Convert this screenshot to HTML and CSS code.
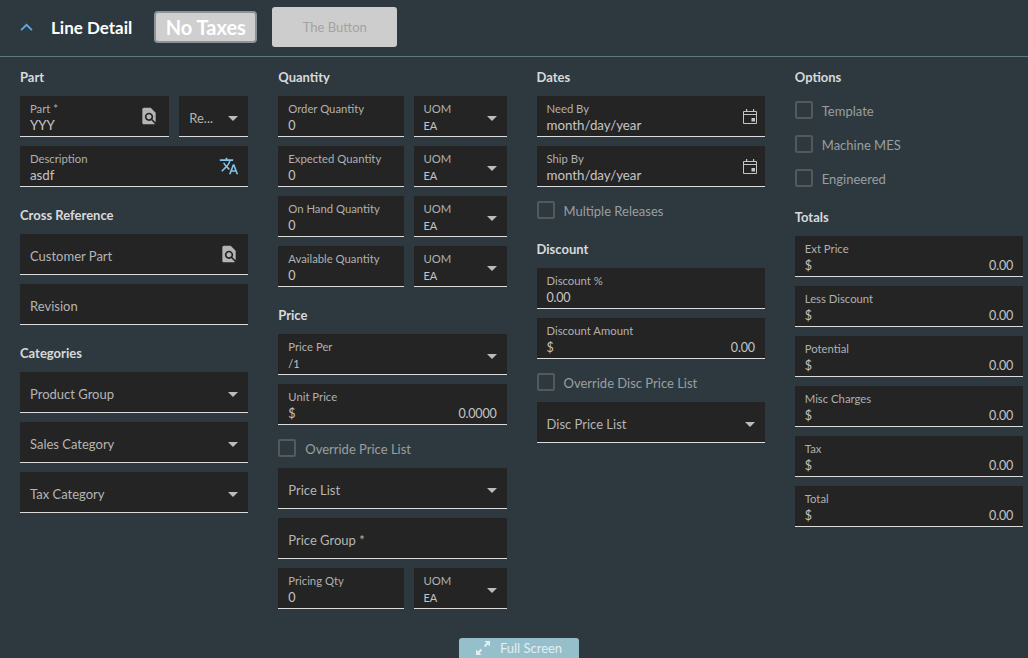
FILE: index.html
```html
<!DOCTYPE html>
<html lang="en">
<head>
    <meta charset="UTF-8">
    <title>Line Detail</title>
    <link rel="stylesheet" href="styles.css">
</head>
<body>
    <header class="top-bar">
        <svg class="chevron" viewBox="0 0 14 10"><path d="M1 8l6-6 6 6" /></svg>
        <span class="top-title">Line Detail</span>
        <button class="tag-button">No Taxes</button>
        <button class="plain-button">The Button</button>
    </header>

    <main class="columns">
        <section>
            <h2>Part</h2>
            <div class="split split-part">
                <div class="field"><label>Part *</label><div class="value">YYY</div>
                    <svg class="icon" viewBox="0 0 24 24"><path d="M20 19.59V8l-6-6H6c-1.1 0-1.99.9-1.99 2L4 20c0 1.1.89 2 1.99 2H18c.45 0 .85-.15 1.19-.4l-4.43-4.43c-.8.52-1.74.83-2.76.83-2.76 0-5-2.24-5-5s2.24-5 5-5 5 2.24 5 5c0 1.02-.31 1.96-.83 2.75L20 19.59zM9 13c0 1.66 1.34 3 3 3s3-1.34 3-3-1.34-3-3-3-3 1.34-3 3z"/></svg>
                </div>
                <div class="field single"><span class="hint">Re...</span><i class="caret"></i></div>
            </div>
            <div class="field"><label>Description</label><div class="value">asdf</div>
                <svg class="icon icon-blue" viewBox="0 0 24 24"><path d="M12.87 15.07l-2.54-2.51.03-.03c1.74-1.94 2.98-4.17 3.71-6.53H17V4h-7V2H8v2H1v1.99h11.17C11.5 7.92 10.43 9.75 9 11.35 8.07 10.32 7.3 9.19 6.69 8h-2c.73 1.63 1.73 3.17 2.98 4.56l-5.09 5.02L4 19l5-5 3.11 3.11.76-2.04zM18.5 10h-2L12 22h2l1.12-3h4.75L21 22h2l-4.5-12zm-2.62 7l1.62-4.33L19.12 17h-3.24z"/></svg>
            </div>

            <h2>Cross Reference</h2>
            <div class="field single"><span class="hint">Customer Part</span>
                <svg class="icon" viewBox="0 0 24 24"><path d="M20 19.59V8l-6-6H6c-1.1 0-1.99.9-1.99 2L4 20c0 1.1.89 2 1.99 2H18c.45 0 .85-.15 1.19-.4l-4.43-4.43c-.8.52-1.74.83-2.76.83-2.76 0-5-2.24-5-5s2.24-5 5-5 5 2.24 5 5c0 1.02-.31 1.96-.83 2.75L20 19.59zM9 13c0 1.66 1.34 3 3 3s3-1.34 3-3-1.34-3-3-3-3 1.34-3 3z"/></svg>
            </div>
            <div class="field single"><span class="hint">Revision</span></div>

            <h2>Categories</h2>
            <div class="field single"><span class="hint">Product Group</span><i class="caret"></i></div>
            <div class="field single"><span class="hint">Sales Category</span><i class="caret"></i></div>
            <div class="field single"><span class="hint">Tax Category</span><i class="caret"></i></div>
        </section>

        <section>
            <h2>Quantity</h2>
            <div class="split">
                <div class="field"><label>Order Quantity</label><div class="value num">0</div></div>
                <div class="field"><label>UOM</label><div class="value small">EA</div><i class="caret"></i></div>
            </div>
            <div class="split">
                <div class="field"><label>Expected Quantity</label><div class="value num">0</div></div>
                <div class="field"><label>UOM</label><div class="value small">EA</div><i class="caret"></i></div>
            </div>
            <div class="split">
                <div class="field"><label>On Hand Quantity</label><div class="value num">0</div></div>
                <div class="field"><label>UOM</label><div class="value small">EA</div><i class="caret"></i></div>
            </div>
            <div class="split">
                <div class="field"><label>Available Quantity</label><div class="value num">0</div></div>
                <div class="field"><label>UOM</label><div class="value small">EA</div><i class="caret"></i></div>
            </div>

            <h2>Price</h2>
            <div class="field"><label>Price Per</label><div class="value small">/1</div><i class="caret"></i></div>
            <div class="field"><label>Unit Price</label><div class="value num money"><span>$</span><span>0.0000</span></div></div>
            <div class="check"><i class="box"></i>Override Price List</div>
            <div class="field single"><span class="hint">Price List</span><i class="caret"></i></div>
            <div class="field single"><span class="hint">Price Group *</span></div>
            <div class="split">
                <div class="field"><label>Pricing Qty</label><div class="value num">0</div></div>
                <div class="field"><label>UOM</label><div class="value small">EA</div><i class="caret"></i></div>
            </div>
        </section>

        <section>
            <h2>Dates</h2>
            <div class="field"><label>Need By</label><div class="value">month/day/year</div>
                <svg class="icon cal" viewBox="0 0 14 15"><path d="M.5 2.5h13v12H.5zM.5 5.5h13" fill="none" stroke="currentColor"/><path d="M3 0h1.2v3H3zM10 0h1.2v3H10z"/><rect x="8.5" y="9" width="3.5" height="3.5"/></svg>
            </div>
            <div class="field"><label>Ship By</label><div class="value">month/day/year</div>
                <svg class="icon cal" viewBox="0 0 14 15"><path d="M.5 2.5h13v12H.5zM.5 5.5h13" fill="none" stroke="currentColor"/><path d="M3 0h1.2v3H3zM10 0h1.2v3H10z"/><rect x="8.5" y="9" width="3.5" height="3.5"/></svg>
            </div>
            <div class="check"><i class="box"></i>Multiple Releases</div>

            <h2>Discount</h2>
            <div class="field"><label>Discount %</label><div class="value num">0.00</div></div>
            <div class="field"><label>Discount Amount</label><div class="value num money"><span>$</span><span>0.00</span></div></div>
            <div class="check"><i class="box"></i>Override Disc Price List</div>
            <div class="field single"><span class="hint">Disc Price List</span><i class="caret"></i></div>
        </section>

        <section>
            <h2>Options</h2>
            <div class="check"><i class="box"></i>Template</div>
            <div class="check"><i class="box"></i>Machine MES</div>
            <div class="check"><i class="box"></i>Engineered</div>

            <h2>Totals</h2>
            <div class="field"><label>Ext Price</label><div class="value num money"><span>$</span><span>0.00</span></div></div>
            <div class="field"><label>Less Discount</label><div class="value num money"><span>$</span><span>0.00</span></div></div>
            <div class="field"><label>Potential</label><div class="value num money"><span>$</span><span>0.00</span></div></div>
            <div class="field"><label>Misc Charges</label><div class="value num money"><span>$</span><span>0.00</span></div></div>
            <div class="field"><label>Tax</label><div class="value num money"><span>$</span><span>0.00</span></div></div>
            <div class="field"><label>Total</label><div class="value num money"><span>$</span><span>0.00</span></div></div>
        </section>
    </main>

    <button class="full-screen">
        <svg viewBox="0 0 14 14"><path d="M8.5 0H14v5.5l-2-2-2.7 2.7-1.5-1.5L10.500 2zM5.500 14H0V8.500l2 2 2.700-2.700 1.500 1.500L3.500 12z"/></svg>
        Full Screen
    </button>
</body>
</html>
```

FILE: styles.css
```css
body {
    margin: 0;
    height: 658px;
    overflow: hidden;
    background: #2e393f;
    font-family: 'Lato', 'Noto Sans', sans-serif;
    color: #b5b5b5;
}

.top-bar {
    display: flex;
    align-items: center;
    height: 54px;
    padding: 0 0 2px 20px;
    border-bottom: 1px solid #5b7c7c;
}

.chevron {
    width: 13px;
    height: 9px;
    fill: none;
    stroke: #5ba9ec;
    stroke-width: 2;
}

.top-title {
    margin-left: 18px;
    font-size: 17px;
    font-weight: 700;
    color: #fff;
}

.tag-button {
    margin-left: 22px;
    width: 103px;
    height: 32px;
    padding: 0;
    background: #cfcfcf;
    border: 2px solid #8d9396;
    border-radius: 4px;
    font-family: inherit;
    font-size: 20px;
    font-weight: 700;
    color: #fff;
}

.plain-button {
    margin-left: 15px;
    width: 125px;
    height: 40px;
    padding: 0;
    background: #cdcdcd;
    border: none;
    border-radius: 3px;
    font-family: inherit;
    font-size: 13px;
    color: #a3a3a3;
}

.columns {
    display: grid;
    grid-template-columns: repeat(4, 1fr);
    gap: 30px;
    padding: 1px 5px 0 20px;
}

h2 {
    margin: 0;
    height: 38px;
    line-height: 38px;
    font-size: 13px;
    font-weight: 700;
    color: #d8dadb;
}

.split {
    display: grid;
    grid-template-columns: 1fr 93px;
    column-gap: 10px;
}

.split-part {
    grid-template-columns: 1fr 69px;
}

.field {
    position: relative;
    height: 40px;
    margin-bottom: 9px;
    padding-left: 10px;
    background: #242424;
    border-bottom: 1px solid #dcdcdc;
    white-space: nowrap;
}

.field label {
    display: block;
    padding-top: 5px;
    font-size: 11.3px;
    line-height: 16px;
    color: #b0b0b0;
}

.value {
    font-size: 13.3px;
    line-height: 16px;
    color: #c4c4c4;
}

.value.num {
    font-size: 12.5px;
    line-height: 18px;
    letter-spacing: -0.2px;
}

.value.small {
    font-size: 11px;
    line-height: 17px;
}

.money {
    display: flex;
    justify-content: space-between;
    padding-right: 10px;
}

.single {
    line-height: 42px;
}

.hint {
    font-size: 13px;
    color: #b5b5b5;
}

.caret {
    position: absolute;
    right: 10px;
    top: 20px;
    border-left: 5px solid transparent;
    border-right: 5px solid transparent;
    border-top: 5px solid #bcbcbc;
}

.icon {
    position: absolute;
    right: 9px;
    top: 10px;
    width: 20px;
    height: 20px;
    fill: #b4b4b4;
}

.split .icon {
    right: 10px;
}

.icon-blue {
    fill: #85c4e6;
}

.cal {
    right: 8px;
    top: 13px;
    width: 14px;
    height: 15px;
    color: #c4c4c4;
    fill: #c4c4c4;
}

.check {
    display: flex;
    align-items: flex-start;
    height: 18px;
    padding: 5px 0 11px;
    font-size: 13px;
    line-height: 20px;
    color: #9a9e9f;
}

.box {
    box-sizing: border-box;
    width: 18px;
    height: 18px;
    margin-right: 9px;
    border: 2px solid #55595a;
    border-radius: 2px;
}

.full-screen {
    position: absolute;
    left: 459px;
    top: 638px;
    display: flex;
    align-items: center;
    justify-content: center;
    gap: 10px;
    width: 120px;
    height: 20px;
    padding: 0;
    background: #95bfcb;
    border: none;
    border-radius: 3px 3px 0 0;
    font-family: inherit;
    font-size: 13px;
    color: #e3eef1;
}

.full-screen svg {
    width: 14px;
    height: 14px;
    fill: #e3eef1;
}
```
